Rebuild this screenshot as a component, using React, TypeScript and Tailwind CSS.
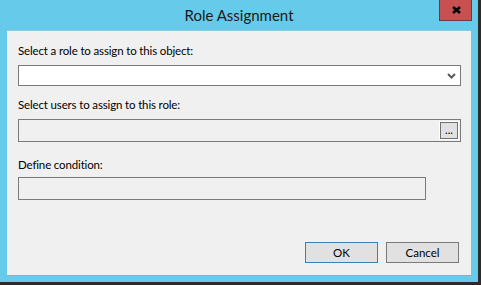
import React from 'react';

function ComboChevron() {
  return (
    <svg width="9" height="6" viewBox="0 0 9 6" className="mr-[4px]">
      <path d="M1 1 L4.5 4.5 L8 1" fill="none" stroke="#5a5a5a" strokeWidth="2" />
    </svg>
  );
}

const label = 'h-[15px] text-[11.5px] leading-[15px] tracking-[-0.15px]';

export default function App() {
  return (
    <div className="w-[481px] h-[285px] bg-[#2b2b2b] overflow-hidden font-['Lato',sans-serif] text-black">
      <div className="w-[478px] h-[282px] bg-[#66cbea] flex flex-col">
        {/* title bar */}
        <div className="relative h-[30px] flex items-center justify-center shrink-0">
          <span className="text-[15px] leading-[18px] text-[#1a1a1a]">Role Assignment</span>
          <div className="absolute top-0 right-[6px] w-[33px] h-[21px] bg-[#c75050] border border-[#6e3b3b] border-t-0 flex items-center justify-center">
            <svg width="9" height="8" viewBox="0 0 9 8" className="ml-[2px]">
              <path d="M1 1 L8 7 M8 1 L1 7" stroke="#000" strokeWidth="2.6" />
            </svg>
          </div>
        </div>

        {/* client area */}
        <div className="flex-1 mx-[7px] mb-[6px] bg-[#f0f0f0] border-t border-[#92c7de] border-b border-b-[#a6a6a6] flex flex-col pl-[11px]">
          <div className={`mt-[12px] ${label}`}>Select a role to assign to this object:</div>
          <div className="mt-[7px] w-[443px] h-[21px] bg-white border border-[#7a7a7a] flex items-center justify-end">
            <ComboChevron />
          </div>

          <div className={`mt-[11px] ${label}`}>Select users to assign to this role:</div>
          <div className="mt-[7px] w-[443px] h-[23px] bg-[#f0f0f0] border border-[#7a7a7a] flex items-center justify-end pr-[1px]">
            <div className="w-[20px] h-[19px] border border-white">
              <div className="w-full h-full bg-[#e1e1e1] border border-[#707070] flex items-center justify-center text-[11px] leading-[11px] pb-[3px]">
                ...
              </div>
            </div>
          </div>

          <div className={`mt-[15px] ${label}`}>Define condition:</div>
          <div className="mt-[5px] w-[408px] h-[23px] bg-[#f0f0f0] border border-[#7a7a7a]" />

          <div className="mt-auto flex justify-end gap-[8px] pr-[12px] pb-[12px]">
            <button className="w-[73px] h-[21px] bg-[#e1e1e1] border border-[#3c7fb1] text-[11.5px] leading-[15px]">
              OK
            </button>
            <button className="w-[73px] h-[21px] bg-[#e1e1e1] border border-[#7a7a7a] text-[11.5px] leading-[15px]">
              Cancel
            </button>
          </div>
        </div>
      </div>
    </div>
  );
}
